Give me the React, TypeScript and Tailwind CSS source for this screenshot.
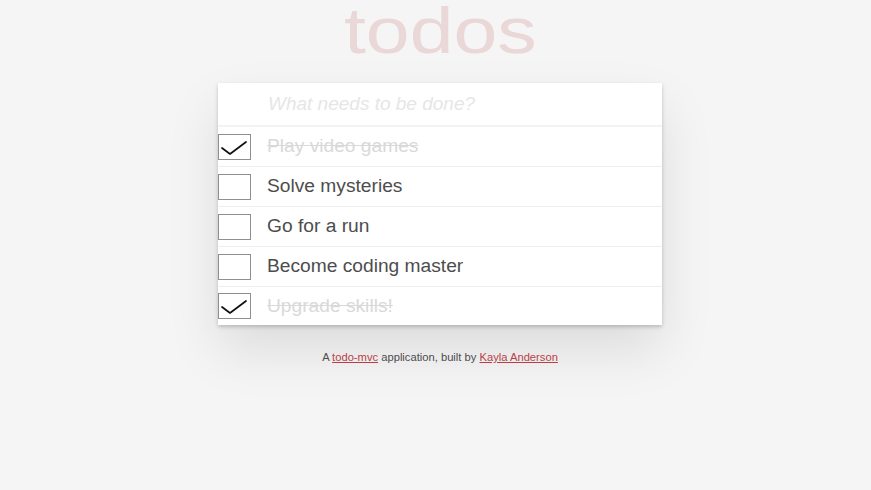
import { useState } from "react";

type Todo = { id: number; text: string; done: boolean };

const initialTodos: Todo[] = [
  { id: 1, text: "Play video games", done: true },
  { id: 2, text: "Solve mysteries", done: false },
  { id: 3, text: "Go for a run", done: false },
  { id: 4, text: "Become coding master", done: false },
  { id: 5, text: "Upgrade skills!", done: true },
];

function CheckBox({ checked, onClick }: { checked: boolean; onClick: () => void }) {
  return (
    <button
      type="button"
      onClick={onClick}
      className="w-[33px] h-[26px] shrink-0 border border-[#8f8f8f] bg-white flex items-center justify-center"
    >
      {checked && (
        <svg width="31" height="24" viewBox="1 1 31 24" fill="none">
          <path d="M4 14 L12 20 L28 8" stroke="#111" strokeWidth="1.7" strokeLinecap="round" strokeLinejoin="round" />
        </svg>
      )}
    </button>
  );
}

export default function App() {
  const [todos, setTodos] = useState<Todo[]>(initialTodos);
  const [input, setInput] = useState("");

  const toggle = (id: number) =>
    setTodos((t) => t.map((x) => (x.id === id ? { ...x, done: !x.done } : x)));

  return (
    <div className="min-h-screen bg-[#f5f5f5] font-['Liberation_Sans',Arial,sans-serif] flex flex-col items-center pl-[9px]">
      <h1 className="text-[64px] leading-[62px] text-[#ead7d7] scale-x-[1.23]">todos</h1>

      <div className="mt-[21px] w-[444px] bg-white shadow-[0_2px_4px_0_rgba(0,0,0,0.2),0_25px_50px_0_rgba(0,0,0,0.1)]">
        <div className="h-[44px] border-b-2 border-[#f2f2f2] flex items-center">
          <input
            value={input}
            onChange={(e) => setInput(e.target.value)}
            placeholder="What needs to be done?"
            className="w-full h-full pl-[50px] pr-4 text-[19px] italic bg-transparent outline-none text-[#4d4d4d] placeholder:text-[#e6e6e6]"
          />
        </div>
        {todos.map((t, i) => (
          <div
            key={t.id}
            className={`flex items-center ${i < todos.length - 1 ? "h-10 border-b border-[#ededed]" : "h-[38px]"}`}
          >
            <CheckBox checked={t.done} onClick={() => toggle(t.id)} />
            <span
              className={`ml-4 text-[19.2px] ${t.done ? "text-[#d9d9d9] line-through" : "text-[#4d4d4d]"}`}
            >
              {t.text}
            </span>
          </div>
        ))}
      </div>

      <p className="mt-[24px] text-[11.2px] text-[#4d4d4d]">
        A <a href="#" className="text-[#b83f45] underline">todo-mvc</a> application, built by{" "}
        <a href="#" className="text-[#b83f45] underline">Kayla Anderson</a>
      </p>
    </div>
  );
}
